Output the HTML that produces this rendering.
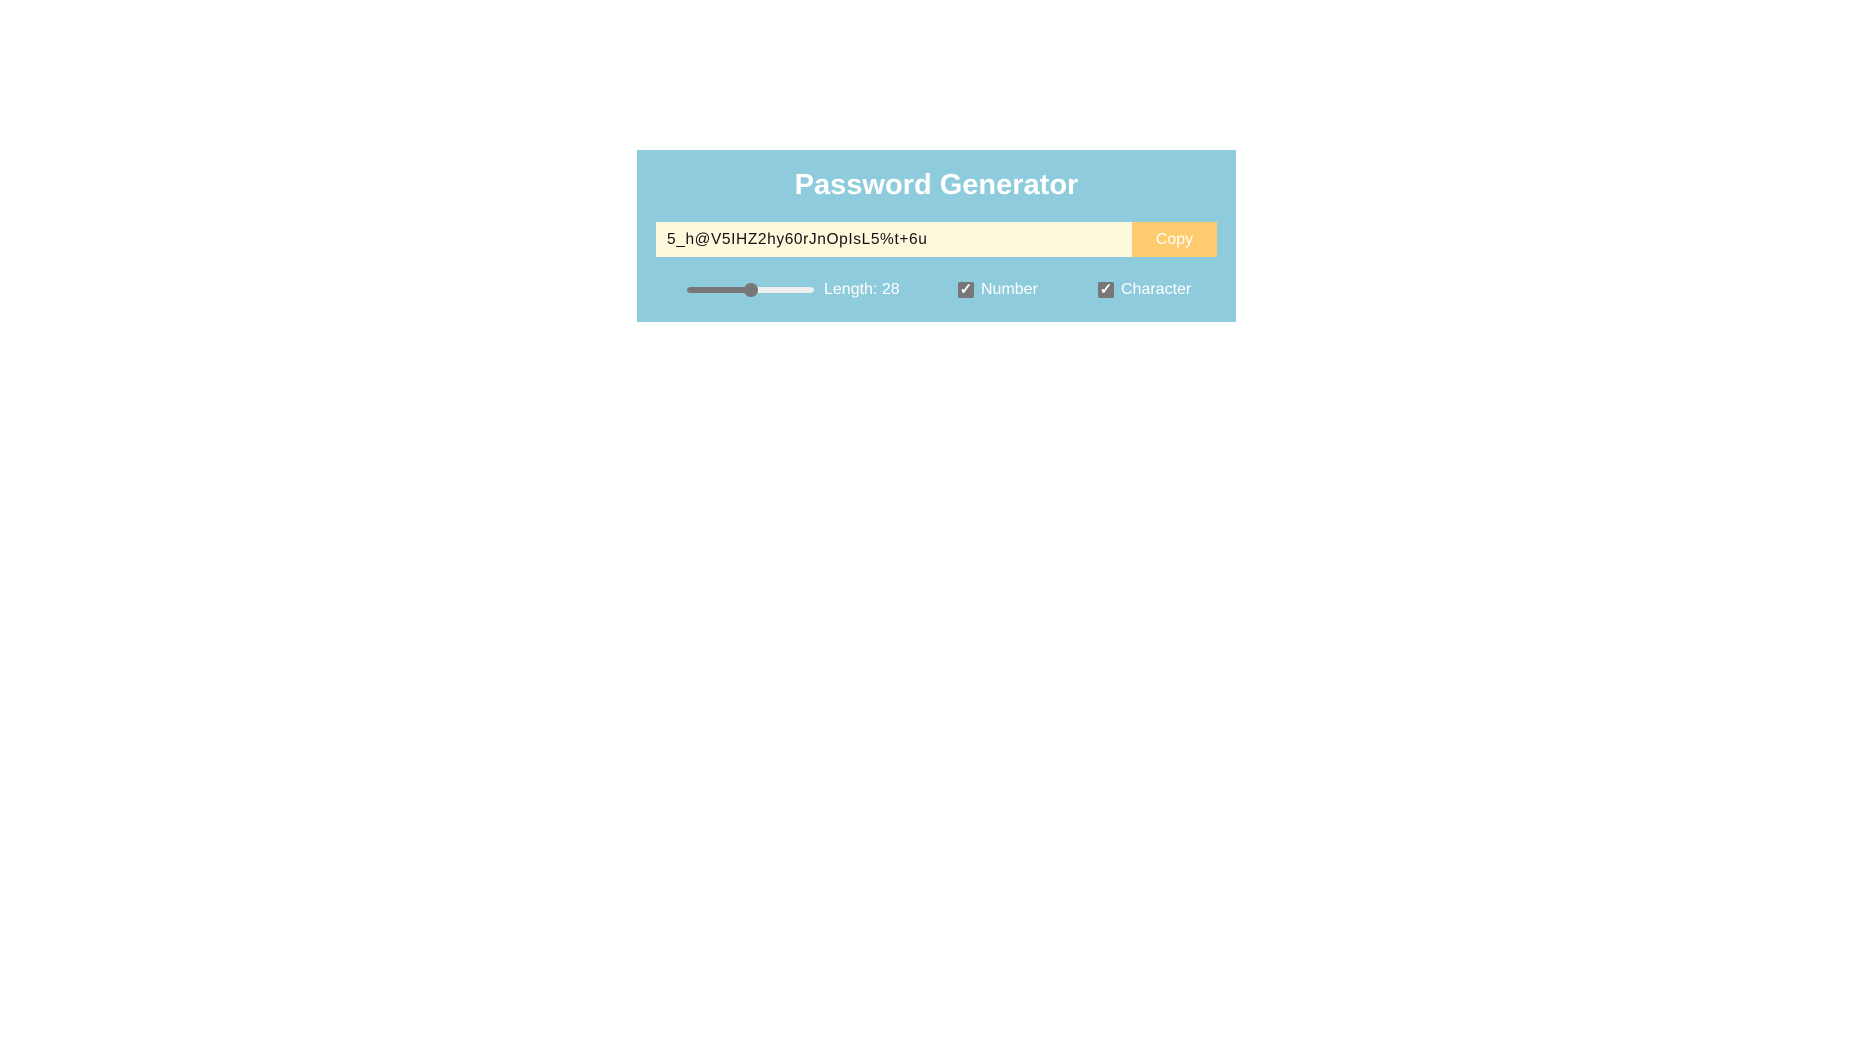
<!DOCTYPE html>
<html><head><style>
body{margin:0;background:#fff;width:1872px;height:1058px;position:relative;font-family:"Liberation Sans",sans-serif;overflow:hidden}
.card{position:absolute;left:637px;top:150px;width:599px;height:172px;background:#8ecbdc}
.t{position:absolute;left:0;width:599px;top:19px;text-align:center;color:#fff;font-weight:bold;font-size:29px}
.inp{position:absolute;left:19px;top:72px;width:476px;height:35px;background:#fef8dd;color:#111;font-size:15.5px;line-height:35px;padding-left:11px;box-sizing:border-box;letter-spacing:0.6px}
.copy{position:absolute;left:495px;top:72px;width:85px;height:35px;background:#fecb6e;color:#fff;font-size:16px;line-height:35px;text-align:center}
.lbl{position:absolute;top:130px;color:#fff;font-size:16px;line-height:20px}
.track{position:absolute;left:50px;top:137px;width:127px;height:6px;border-radius:3px;background:#eee}
.fill{position:absolute;left:50px;top:137px;width:64px;height:6px;border-radius:3px;background:#777}
.thumb{position:absolute;left:107px;top:133px;width:14px;height:14px;border-radius:50%;background:#777}
.cb{position:absolute;top:132px;width:16px;height:16px;border-radius:2px;background:#777;color:#fff;font-size:15px;line-height:16px;text-align:center;font-weight:bold}
</style></head><body>
<div class="card">
<div class="t">Password Generator</div>
<div class="inp">5_h@V5IHZ2hy60rJnOpIsL5%t+6u</div>
<div class="copy">Copy</div>
<div class="track"></div><div class="fill"></div><div class="thumb"></div>
<div class="lbl" style="left:187px">Length: 28</div>
<div class="cb" style="left:321px">✓</div>
<div class="lbl" style="left:344px">Number</div>
<div class="cb" style="left:461px">✓</div>
<div class="lbl" style="left:484px">Character</div>
</div>
</body></html>
